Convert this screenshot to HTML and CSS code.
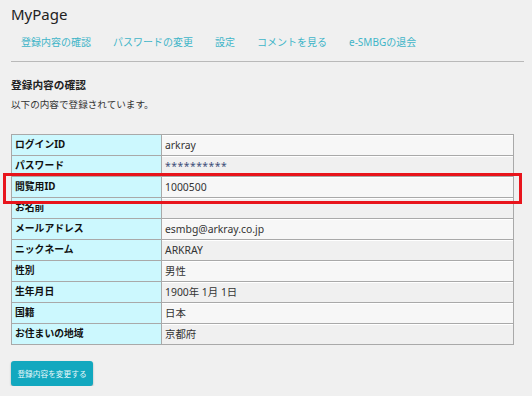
FILE: index.html
```html
<!DOCTYPE html>
<html lang="ja">
<head>
<meta charset="utf-8">
<link rel="stylesheet" href="styles.css">
</head>
<body>
<div class="page">
  <h1 class="title">MyPage</h1>
  <nav class="nav">
    <a href="#">登録内容の確認</a>
    <a href="#">パスワードの変更</a>
    <a href="#">設定</a>
    <a href="#">コメントを見る</a>
    <a href="#">e-SMBGの退会</a>
  </nav>
  <div class="rule"></div>
  <h2 class="heading">登録内容の確認</h2>
  <p class="lead">以下の内容で登録されています。</p>
  <div class="table-wrap">
    <table class="info">
      <tr><th>ログインID</th><td>arkray</td></tr>
      <tr><th>パスワード</th><td class="pw">**********</td></tr>
      <tr><th>閲覧用ID</th><td>1000500</td></tr>
      <tr><th>お名前</th><td></td></tr>
      <tr><th>メールアドレス</th><td>esmbg@arkray.co.jp</td></tr>
      <tr><th>ニックネーム</th><td>ARKRAY</td></tr>
      <tr><th>性別</th><td>男性</td></tr>
      <tr><th>生年月日</th><td>1900年 1月 1日</td></tr>
      <tr><th>国籍</th><td>日本</td></tr>
      <tr><th>お住まいの地域</th><td>京都府</td></tr>
    </table>
    <div class="highlight"></div>
  </div>
  <button class="btn">登録内容を変更する</button>
</div>
</body>
</html>
```
FILE: styles.css
```css
html, body {
  margin: 0;
  padding: 0;
  background: #f0f0f0;
}
body {
  font-family: "Noto Sans", "Noto Sans CJK JP", sans-serif;
  color: #222;
}
.page {
  padding: 4px 8px 0 11px;
}
.title {
  margin: 0;
  font-size: 15px;
  font-weight: normal;
  line-height: 20px;
  color: #222;
}
.nav {
  display: flex;
  gap: 22px;
  padding-left: 10px;
  margin-top: 10px;
  line-height: 16px;
}
.nav a {
  font-size: 10px;
  color: #3fb5c8;
  text-decoration: none;
}
.rule {
  margin-top: 11px;
  height: 0;
  border-top: 1px solid #b9b9b9;
}
.heading {
  margin: 15px 0 0;
  font-size: 10.7px;
  font-weight: bold;
  line-height: 16px;
  color: #222;
}
.lead {
  margin: 4px 0 0;
  font-size: 9.6px;
  line-height: 16px;
  color: #333;
}
.table-wrap {
  position: relative;
  margin-top: 21px;
  width: 503px;
}
.info {
  width: 503px;
  border-collapse: collapse;
  font-size: 9.8px;
}
.info th, .info td {
  height: 20px;
  padding: 0 3px;
  border: 1px solid #a9a9a9;
  text-align: left;
  line-height: 20px;
}
.info th {
  width: 143px;
  background: #ccf8fe;
  font-weight: bold;
  color: #111;
}
.info td {
  color: #333;
  font-size: 10.4px;
  box-shadow: inset 0 1px 0 #ffffff;
}
.info tr:nth-child(odd) td {
  background: #f7f7f7;
}
.info tr:nth-child(even) td {
  background: #f0f0f0;
}
.info td.pw {
  color: #3f4f7a;
  letter-spacing: 0.5px;
}
.highlight {
  position: absolute;
  left: -8px;
  top: 39px;
  width: 513px;
  height: 25px;
  border: 3px solid #e8141c;
}
.btn {
  display: block;
  margin-top: 16px;
  width: 82px;
  height: 25px;
  padding: 0;
  border: none;
  border-radius: 3px;
  background: #12a8bf;
  color: #eaf8fb;
  font-family: "Noto Sans CJK JP", sans-serif;
  font-size: 7.7px;
  box-shadow: 0 1px 2px rgba(0,0,0,0.3);
}
```
